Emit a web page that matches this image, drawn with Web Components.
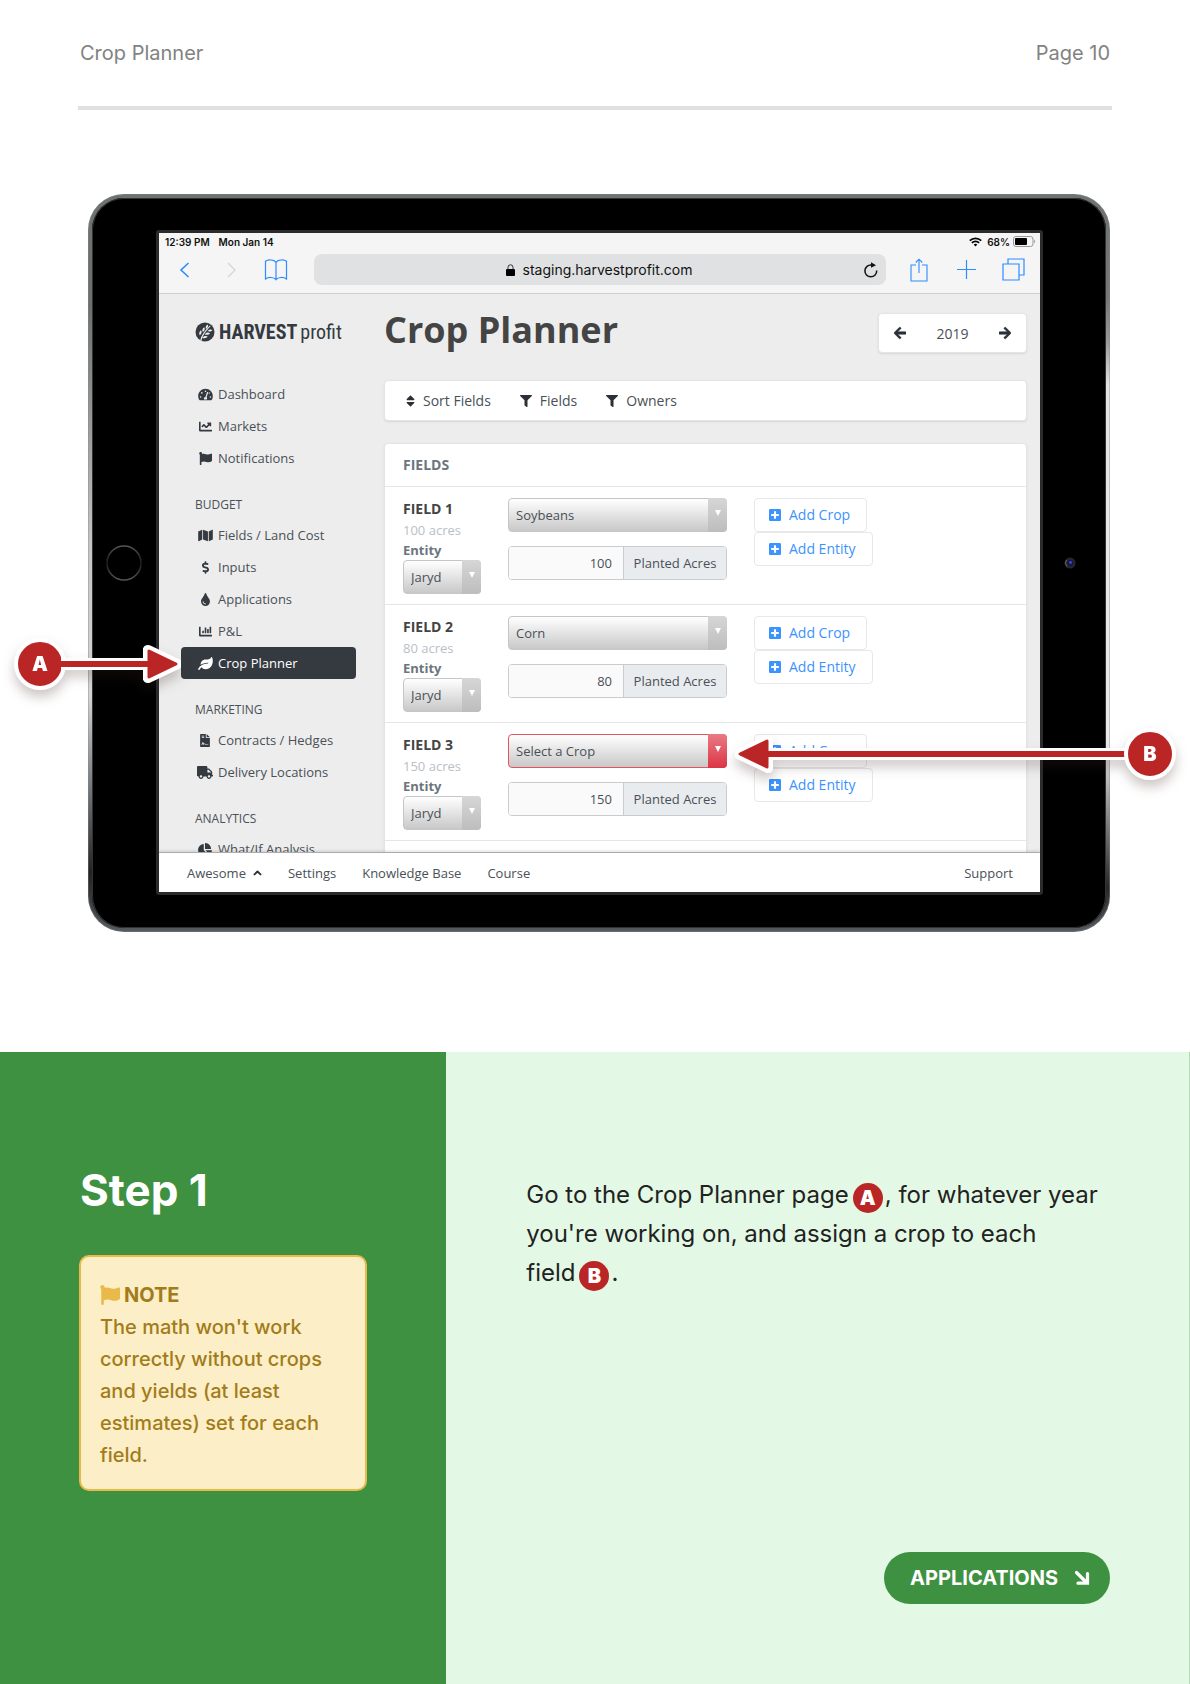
<!DOCTYPE html>
<html lang="en">
<head>
<meta charset="utf-8">
<meta name="viewport" content="width=device-width, initial-scale=1">
<title>Crop Planner – Page 10</title>
<style>
  html, body { margin: 0; }
  body {
    display: flex; flex-direction: column; min-height: 100vh;
    background: #fff; color: #222; font-family: Inter, "Liberation Sans", sans-serif;
    --green: #3f9142; --mint: #e3f9e5; --red: #ba2525;
  }
  .keep { white-space: nowrap; }
</style>
</head>
<body>
<guide-header><span>Crop Planner</span><span slot="page">Page 10</span></guide-header>

<device-stage>
  <tablet-frame>
    <browser-bar></browser-bar>
    <planner-app>
      <side-nav slot="nav">
        <nav-item icon="gauge">Dashboard</nav-item>
        <nav-item icon="line">Markets</nav-item>
        <nav-item icon="flag">Notifications</nav-item>
        <nav-title>BUDGET</nav-title>
        <nav-item icon="map">Fields / Land Cost</nav-item>
        <nav-item icon="dollar">Inputs</nav-item>
        <nav-item icon="drop">Applications</nav-item>
        <nav-item icon="bars">P&amp;L</nav-item>
        <nav-item icon="leaf" active>Crop Planner</nav-item>
        <nav-title>MARKETING</nav-title>
        <nav-item icon="contract">Contracts / Hedges</nav-item>
        <nav-item icon="truck">Delivery Locations</nav-item>
        <nav-title>ANALYTICS</nav-title>
        <nav-item icon="pie">What/If Analysis</nav-item>
      </side-nav>
      <field-row name="FIELD 1" acres="100" crop="Soybeans"></field-row>
      <field-row name="FIELD 2" acres="80" crop="Corn"></field-row>
      <field-row name="FIELD 3" acres="150" crop="Select a Crop" invalid></field-row>
    </planner-app>
    <app-footer></app-footer>
  </tablet-frame>
  <callout-arrow slot="a" letter="A"></callout-arrow>
  <callout-arrow slot="b" letter="B"></callout-arrow>
</device-stage>

<step-section>
  <span slot="title">Step 1</span>
  <note-box slot="note">The math won't work correctly without crops and yields (at least estimates) set for each field.</note-box>
  <span>Go to the Crop Planner page<marker-badge>A</marker-badge>, for whatever year you're working on, and assign a crop to each <span class="keep">field<marker-badge>B</marker-badge>.</span></span>
  <pill-link slot="link">APPLICATIONS</pill-link>
</step-section>

<script>
const define = (name, css, html) => {
  const template = document.createElement('template');
  customElements.define(name, class extends HTMLElement {
    connectedCallback() {
      if (this.shadowRoot) return;
      const root = this.attachShadow({ mode: 'open' });
      template.innerHTML = `<style>:host,*{box-sizing:border-box}${css}</style>` +
        (typeof html === 'function' ? html(this) : html);
      root.append(template.content.cloneNode(true));
    }
  });
};

const ICONS = {
  gauge: [576, '<path fill-rule="evenodd" d="M288 32C129 32 0 161 0 320c0 53 14 102 39 145 6 10 16 15 28 15h442c12 0 22-5 28-15 25-43 39-92 39-145C576 161 447 32 288 32zm0 64a32 32 0 1 1 0 64 32 32 0 0 1 0-64zM96 384a32 32 0 1 1 0-64 32 32 0 0 1 0 64zm48-160a32 32 0 1 1 0-64 32 32 0 0 1 0 64zm247-39l-61 183c27 20 29 56 14 80H232c-20-40 6-94 53-96l61-182c10-30 54-15 45 15zm41 39c-10 0-18-4-24-11l16-48c22-5 40 8 40 27 0 18-14 32-32 32zm48 160a32 32 0 1 1 0-64 32 32 0 0 1 0 64z"/>'],
  line: [512, '<path d="M496 384H64V80c0-8.84-7.16-16-16-16H16C7.16 64 0 71.16 0 80v336c0 17.67 14.33 32 32 32h464c8.84 0 16-7.16 16-16v-32c0-8.84-7.16-16-16-16zM464 96H345.94c-21.38 0-32.09 25.85-16.97 40.97l32.4 32.4L288 242.75l-73.37-73.37c-12.5-12.5-32.76-12.5-45.25 0l-68.69 68.69c-6.25 6.25-6.25 16.38 0 22.63l22.62 22.62c6.25 6.25 16.38 6.25 22.63 0L192 237.25l73.37 73.37c12.5 12.5 32.76 12.5 45.25 0l96-96 32.4 32.4c15.12 15.12 40.97 4.41 40.97-16.97V112c.01-8.84-7.15-16-15.99-16z"/>'],
  flag: [512, '<path d="M349.565 98.783C295.978 98.783 251.721 64 184.348 64c-24.955 0-47.309 4.384-68.045 12.013a55.947 55.947 0 0 0 3.586-23.562C118.117 24.015 94.806 1.206 66.338.048 34.345-1.254 8 24.296 8 56c0 19.026 9.497 35.825 24 45.945V488c0 13.255 10.745 24 24 24h16c13.255 0 24-10.745 24-24v-94.4c28.311-12.064 63.582-22.122 114.435-22.122 53.588 0 97.844 34.783 165.217 34.783 48.169 0 86.667-16.294 122.505-40.858C506.84 359.452 512 349.571 512 339.045v-243.1c0-23.393-24.269-38.87-45.485-29.016-34.338 15.948-76.454 31.854-116.95 31.854z"/>'],
  map: [576, '<path d="M0 117.66v346.32c0 11.32 11.43 19.06 21.94 14.86L160 416V32L20.12 87.95A32.006 32.006 0 0 0 0 117.66zM192 416l192 64V96L192 32v384zM554.06 33.16L416 96v384l139.88-55.95A31.996 31.996 0 0 0 576 394.34V48.02c0-11.32-11.43-19.06-21.94-14.86z"/>'],
  dollar: [288, '<path d="M209.2 233.4l-108-31.6C88.7 198.2 80 186.5 80 173.5c0-16.3 13.2-29.5 29.5-29.5h66.3c12.2 0 24.2 3.7 34.2 10.5 6.1 4.1 14.3 3.1 19.5-2l34.8-34c7.1-6.9 6.1-18.4-1.8-24.5C238 74.8 207.4 64.1 176 64V16c0-8.8-7.2-16-16-16h-32c-8.8 0-16 7.2-16 16v48h-2.5C45.8 64-5.4 118.7.5 183.6c4.2 46.1 39.4 83.6 83.8 96.6l102.5 30c12.5 3.7 21.2 15.3 21.2 28.3 0 16.3-13.2 29.5-29.5 29.5h-66.3C100 368 88 364.3 78 357.5c-6.1-4.1-14.3-3.1-19.5 2l-34.8 34c-7.1 6.9-6.1 18.4 1.8 24.5 24.5 19.2 55.1 29.9 86.5 30v48c0 8.8 7.2 16 16 16h32c8.8 0 16-7.2 16-16v-48.2c46.6-.9 90.3-28.6 105.7-72.7 21.5-61.6-14.6-124.8-72.5-141.7z"/>'],
  drop: [352, '<path d="M205.22 22.09c-7.94-28.78-49.44-30.12-58.44 0C100.01 179.85 0 222.72 0 333.91 0 432.35 78.72 512 176 512s176-79.65 176-178.09c0-111.75-99.79-153.34-146.78-311.82zM176 448c-61.75 0-112-50.25-112-112 0-8.84 7.16-16 16-16s16 7.16 16 16c0 44.11 35.89 80 80 80 8.84 0 16 7.16 16 16s-7.16 16-16 16z"/>'],
  bars: [512, '<path d="M332.8 320h38.4c6.4 0 12.8-6.4 12.8-12.8V172.8c0-6.4-6.4-12.8-12.8-12.8h-38.4c-6.4 0-12.8 6.4-12.8 12.8v134.4c0 6.4 6.4 12.8 12.8 12.8zm96 0h38.4c6.4 0 12.8-6.4 12.8-12.8V76.8c0-6.4-6.4-12.8-12.8-12.8h-38.4c-6.4 0-12.8 6.4-12.8 12.8v230.4c0 6.4 6.4 12.8 12.8 12.8zm-288 0h38.4c6.4 0 12.8-6.4 12.8-12.8v-70.4c0-6.4-6.4-12.8-12.8-12.8h-38.4c-6.4 0-12.8 6.4-12.8 12.8v70.4c0 6.4 6.4 12.8 12.8 12.8zm96 0h38.4c6.4 0 12.8-6.4 12.8-12.8V108.8c0-6.4-6.4-12.8-12.8-12.8h-38.4c-6.4 0-12.8 6.4-12.8 12.8v198.4c0 6.4 6.4 12.8 12.8 12.8zM496 384H64V80c0-8.84-7.16-16-16-16H16C7.16 64 0 71.16 0 80v336c0 17.67 14.33 32 32 32h464c8.84 0 16-7.16 16-16v-32c0-8.84-7.16-16-16-16z"/>'],
  leaf: [576, '<path d="M546.2 9.7c-5.6-12.5-21.6-13-28.3-1.2C486.9 62.4 431.4 96 368 96h-80C182 96 96 182 96 288c0 7 .8 13.7 1.5 20.5C161.3 262.8 253.4 224 384 224c8.8 0 16 7.2 16 16s-7.2 16-16 16C132.6 256 26 410.1 2.4 468c-6.6 16.3 1.2 34.9 17.5 41.6 16.4 6.8 35-1.1 41.8-17.3 1.5-3.6 20.9-47.9 71.9-90.6 32.4 43.9 94 85.8 174.9 77.2C465.5 467.5 576 326.7 576 154.3c0-50.2-10.8-102.2-29.8-144.6z"/>'],
  contract: [384, '<path fill-rule="evenodd" d="M224 136V0H24C11 0 0 11 0 24v464c0 13 11 24 24 24h336c13 0 24-11 24-24V160H248c-13 0-24-11-24-24zM64 64h96v32H64zm0 64h96v32H64zm256 300h-90c-18 0-34-10-42-25-6-11-18-9-22 0l-12 25h-24l-30-50-14 54H56l32-112h30l34 62c18-18 50-12 62 11l8 7h98zM256 0v128h128z"/>'],
  truck: [640, '<path d="M624 352h-16V243.9c0-12.7-5.1-24.9-14.1-33.9L494 110.1c-9-9-21.2-14.1-33.9-14.1H416V48c0-26.5-21.5-48-48-48H48C21.5 0 0 21.5 0 48v320c0 26.5 21.5 48 48 48h16c0 53 43 96 96 96s96-43 96-96h128c0 53 43 96 96 96s96-43 96-96h48c8.8 0 16-7.2 16-16v-32c0-8.8-7.2-16-16-16zM160 464c-26.5 0-48-21.5-48-48s21.5-48 48-48 48 21.5 48 48-21.5 48-48 48zm320 0c-26.5 0-48-21.5-48-48s21.5-48 48-48 48 21.5 48 48-21.5 48-48 48zm80-208H416V144h44.1l99.9 99.9V256z"/>'],
  pie: [544, '<path d="M527.79 288H290.5l158.03 158.03c6.04 6.04 15.98 6.53 22.19.68 38.7-36.46 65.32-85.61 73.13-140.86 1.34-9.46-6.51-17.85-16.06-17.85zm-15.83-64.8C503.72 103.74 408.26 8.28 288.8.04 279.68-.59 272 7.1 272 16.24V240h223.77c9.14 0 16.82-7.68 16.19-16.8zM224 288V50.71c0-9.55-8.39-17.4-17.84-16.06C86.99 51.49-4.1 155.6.14 280.37 4.5 408.51 114.83 513.59 243.03 511.98c50.4-.63 96.97-16.87 135.26-44.03 7.9-5.6 8.42-17.23 1.57-24.08L224 288z"/>'],
  sort: [320, '<path d="M41 288h238c21.4 0 32.1 25.9 17 41L177 448c-9.4 9.4-24.6 9.4-33.9 0L24 329c-15.1-15.1-4.4-41 17-41zm255-105L177 64c-9.4-9.4-24.6-9.4-33.9 0L24 183c-15.1 15.1-4.4 41 17 41h238c21.4 0 32.1-25.9 17-41z"/>'],
  filter: [512, '<path d="M487.976 0H24.028C2.71 0-8.047 25.866 7.058 40.971L192 225.941V432c0 7.831 3.821 15.17 10.237 19.662l80 55.98C298.02 518.69 320 507.493 320 487.98V225.941l184.947-184.97C520.021 25.896 509.338 0 487.976 0z"/>'],
  plus: [448, '<path d="M400 32H48C21.5 32 0 53.5 0 80v352c0 26.5 21.5 48 48 48h352c26.5 0 48-21.5 48-48V80c0-26.5-21.5-48-48-48zm-32 252c0 6.6-5.4 12-12 12h-92v92c0 6.6-5.4 12-12 12h-56c-6.6 0-12-5.4-12-12v-92H92c-6.6 0-12-5.4-12-12v-56c0-6.6 5.4-12 12-12h92v-92c0-6.6 5.4-12 12-12h56c6.6 0 12 5.4 12 12v92h92c6.6 0 12 5.4 12 12v56z"/>'],
  left: [448, '<path stroke="currentColor" stroke-width="18" d="M257.5 445.1l-22.2 22.2c-9.4 9.4-24.6 9.4-33.9 0L7 273c-9.4-9.4-9.4-24.6 0-33.9L201.4 44.7c9.4-9.4 24.6-9.4 33.9 0l22.2 22.2c9.5 9.5 9.3 25-.4 34.3L136.600 206H424c13.3 0 24 10.700 24 24v52c0 13.300-10.700 24-24 24H136.600l120.500 104.800c9.800 9.300 10 24.800.4 34.300z"/>'],
  right: [448, '<path stroke="currentColor" stroke-width="18" transform="translate(448 0) scale(-1 1)" d="M257.5 445.1l-22.2 22.2c-9.4 9.4-24.6 9.4-33.9 0L7 273c-9.4-9.4-9.4-24.6 0-33.9L201.4 44.7c9.4-9.4 24.6-9.4 33.9 0l22.2 22.2c9.5 9.5 9.3 25-.4 34.3L136.600 206H424c13.3 0 24 10.700 24 24v52c0 13.300-10.700 24-24 24H136.600l120.500 104.800c9.800 9.300 10 24.800.4 34.300z"/>'],
  up: [448, '<path fill="none" stroke="currentColor" stroke-width="96" stroke-linecap="round" stroke-linejoin="round" d="M70 330l154-150 154 150"/>']
};
const icon = (name, size) =>
  `<svg aria-hidden="true" width="${Math.round(ICONS[name][0] / 512 * size)}" height="${size}" viewBox="0 0 ${ICONS[name][0]} 512" fill="currentColor">${ICONS[name][1]}</svg>`;

define('guide-header', `
  :host{display:block;padding:0 78px}
  header{display:flex;justify-content:space-between;align-items:center;height:110px;padding:0 2px;
    border-bottom:4px solid #e0e0e0;color:#828282;font-size:20px;line-height:24px}`,
  `<header><slot></slot><slot name="page"></slot></header>`);

define('device-stage', `
  :host{display:block;position:relative;padding:84px 80px 120px 88px}
  ::slotted([slot=a]){position:absolute;left:10px;top:524px;width:171px;height:60px}
  ::slotted([slot=b]){position:absolute;left:735px;right:10px;top:614px;height:60px}`,
  `<slot></slot><slot name="a"></slot><slot name="b"></slot>`);

define('tablet-frame', `
  :host{display:block}
  .rim{padding:4px;border-radius:36px;box-shadow:inset 0 0 0 1px #8886;
    background:
      linear-gradient(to bottom,#6d7272 0,#6c6f70 15%,#c4c6c7 48%,#d2d4d5 68%,#777c82 80%,#222 92%,#555b60 100%) left/50% 100% no-repeat,
      linear-gradient(to bottom,#6d7272 0,#777 14%,#999 20%,#e4e4e4 26%,#e9e9e9 75%,#8a8a8a 84%,#2a2628 94%,#555b60 100%) right/50% 100% no-repeat}
  .glass{display:flex;align-items:stretch;background:#000;border-radius:32px;padding:32px 0 33px;box-shadow:inset 0 0 0 1px #333}
  .side{flex:0 0 64px;display:flex;align-items:center;justify-content:center}
  .side:last-child{flex-basis:63px;padding-right:9px}
  .screen{flex:1;min-width:0;border:3px solid #2b2b2c;border-radius:3px;background:#ededed;overflow:hidden}
  .home{border:0;padding:0;background:none;display:flex}`,
  `<div class="rim"><div class="glass">
    <div class="side"><button class="home" aria-label="Home"><svg width="38" height="38" viewBox="0 0 38 38" fill="none"><defs><linearGradient id="g" x2="0" y2="1"><stop stop-color="#555"/><stop offset=".5" stop-color="#1a1a1a"/><stop offset="1" stop-color="#555"/></linearGradient></defs><circle cx="19" cy="19" r="17" stroke="url(#g)" stroke-width="1.6"/></svg></button></div>
    <div class="screen"><slot></slot></div>
    <div class="side"><svg width="12" height="12" viewBox="0 0 12 12"><circle cx="6" cy="6" r="5.5" fill="#26262b"/><path d="M2.5 3a5 5 0 0 0 .5 6.500" stroke="#666" fill="none"/><circle cx="6.500" cy="6" r="3" fill="#16164f"/><circle cx="6.500" cy="5.500" r="1.400" fill="#4048d0"/></svg></div>
  </div></div>`);

define('browser-bar', `
  :host{display:block;height:61px;background:#f5f5f5;border-bottom:1px solid #cdd0cf;color:#111}
  .status{display:flex;align-items:center;height:21px;padding:0 4px 4px 6px;font-size:10px;line-height:12px;font-weight:600}
  .status span+span{margin-left:9px}
  .status .wifi{margin-left:auto}
  .status .wifi+span{margin:0 3px 0 5px}
  .bar{display:flex;align-items:center;height:31px;color:#2d8cff}
  button{display:flex;justify-content:center;padding:0;border:0;background:none;color:inherit}
  button svg{fill:none;stroke:currentColor}
  .back{margin-left:20px}.fwd{margin-left:36px;color:#d5d5d7}.book{margin-left:27px}
  .addr{flex:1;display:flex;align-items:center;height:31px;margin:0 21px 0 26px;padding:0 8px 0 20px;border-radius:8px;background:#e0e1e3;color:#111}
  .url{flex:1;display:flex;align-items:center;justify-content:center;gap:8px;font-size:14px;line-height:18px}
  .tools{display:flex;align-items:center;gap:23px;margin-right:15px}
  .tools button{width:24px}`,
  `<div class="status"><span>12:39 PM</span><span>Mon Jan 14</span>
    <svg class="wifi" width="13" height="10" viewBox="0 0 13 10" fill="none" stroke="#000" stroke-width="1.700"><path d="M.8 3.700a8 8 0 0 1 11.400 0M2.900 5.900a5 5 0 0 1 7.200 0"/><path d="M6.500 9.500L4.700 7.600a2.500 2.500 0 0 1 3.600 0z" fill="#000" stroke="none"/></svg>
    <span>68%</span><svg width="23" height="11" viewBox="0 0 23 11"><rect x=".5" y=".5" width="19.500" height="10" rx="2.500" fill="none" stroke="#999"/><rect x="2" y="2" width="12" height="7" rx="1" fill="#000"/><path d="M21.200 3.800c1.400.5 1.400 2.900 0 3.400z" fill="#999"/></svg></div>
  <div class="bar">
    <button class="back" aria-label="Back"><svg width="11" height="18" viewBox="0 0 11 18" stroke-width="1.600"><path d="M9.500 2L2 9l7.500 7"/></svg></button>
    <button class="fwd" aria-label="Forward"><svg width="11" height="18" viewBox="0 0 11 18" stroke-width="1.300"><path d="M2 2l7 7-7 7"/></svg></button>
    <button class="book" aria-label="Bookmarks"><svg width="24" height="22" viewBox="0 0 24 22" stroke-width="1.200"><path d="M12 3.500C10.500.5 3.500.2 1.500 2.500V20c3-2.300 8.500-2 10.500.7C14 18 19.500 17.700 22.500 20V2.500C20.500.2 13.500.5 12 3.500zV21"/></svg></button>
    <div class="addr"><div class="url"><svg width="9" height="12" viewBox="0 0 9 12"><rect y="5" width="9" height="7" rx="1"/><path d="M2 5.500V3.300a2.500 2.500 0 0 1 5 0v2.200" fill="none" stroke="#333"/></svg><span>staging.harvestprofit.com</span></div>
      <button aria-label="Reload"><svg width="14" height="16" viewBox="0 0 14 16" stroke-width="1.500"><path d="M12.700 8.500A5.900 5.900 0 1 1 7.500 3"/><path d="M7 .3l5 2.900-5 2.600z" fill="#111" stroke="none"/></svg></button></div>
    <div class="tools">
      <button aria-label="Share"><svg width="18" height="24" viewBox="0 0 18 24" stroke-width="1.100"><path d="M6 7H1v16h16V7h-5M9 15V1.500M5.700 4.500L9 1.200l3.300 3.300"/></svg></button>
      <button aria-label="New tab"><svg width="19" height="19" viewBox="0 0 19 19" stroke-width="1.200"><path d="M9.500 0v19M0 9.500h19"/></svg></button>
      <button aria-label="Tabs"><svg width="23" height="23" viewBox="0 0 23 23" stroke-width="1.200"><path d="M1 6h16v16H1zM6 6V1h16v16h-5"/></svg></button>
    </div>
  </div>`);

define('planner-app', `
  :host{display:flex;height:558px;overflow:hidden;background:#ededed;font-family:"Open Sans","Noto Sans",sans-serif;color:#495057}
  main{flex:1;min-width:0;padding:0 13px 0 28px}
  .top{display:flex;align-items:flex-start;justify-content:space-between;height:86px}
  h1{margin:12px 0 0;font-size:36px;line-height:48px;color:#444;font-weight:700}
  .card{background:#fff;border:1px solid #e3e4e6;border-radius:4px;box-shadow:0 1px 2px #d5d7da}
  .year{display:flex;align-items:center;justify-content:space-between;width:149px;height:40px;margin-top:19px;padding:0 15px;font-size:14px}
  button{display:flex;align-items:center;padding:0;border:0;background:none;font:inherit;color:inherit}
  button svg{color:#2b3036}
  .filters{display:flex;align-items:center;gap:29px;height:41px;padding:0 21px;font-size:14px;line-height:20px}
  .filters button{gap:8px}
  .fields{margin-top:22px;padding-bottom:30px}
  h2{margin:0;padding:0 18px;height:43px;border-bottom:1px solid #e5e6e8;font-size:14px;line-height:42px;color:#6c757d}`,
  `<slot name="nav"></slot><main>
    <div class="top"><h1>Crop Planner</h1><div class="card year"><button aria-label="Previous year">${icon('left',14)}</button><span>2019</span><button aria-label="Next year">${icon('right',14)}</button></div></div>
    <div class="card filters"><button>${icon('sort',14)}Sort Fields</button><button>${icon('filter',12)}Fields</button><button>${icon('filter',12)}Owners</button></div>
    <section class="card fields"><h2>FIELDS</h2><slot></slot></section>
  </main>`);

define('side-nav', `
  :host{display:block;flex:0 0 197px;padding-left:22px}
  .brand{display:flex;align-items:center;gap:4px;height:84px;padding:0 0 9px 14px;color:#343a40;
    font-family:"Liberation Sans Narrow","Roboto Condensed","Liberation Sans",sans-serif;font-size:20px;line-height:24px;white-space:nowrap}
  .brand b{margin-right:3px}
  .brand span{display:block}`,
  `<div class="brand"><svg width="20" height="20" viewBox="0 0 20 20"><circle cx="10" cy="10" r="9.500" fill="#343a40"/><g fill="#ededed"><path d="M5.200 18.300c1-5 4.600-9.500 9.700-14.700l.7.700C10.700 9.300 7.400 13.500 6.500 19z"/><path d="M4.600 13.200c-.9-2.400 0-4 1.500-5 .9 1.800.7 3.600-1.500 5zM7.700 10c-.8-2.300.1-3.900 1.600-4.800.9 1.700.6 3.500-1.600 4.800zM10.900 7c-.6-2.300.2-3.700 1.800-4.500.8 1.700.4 3.300-1.800 4.500zM7.200 15.900c2.500.9 4.400.2 5.500-1.300-1.900-1-3.900-.8-5.500 1.300zM9.800 12.400c2.300.9 4.200.2 5.200-1.200-1.800-1-3.700-.8-5.200 1.200zM12.500 9.100c2.200.8 3.900.2 4.900-1.200-1.700-.9-3.500-.7-4.900 1.200z"/></g></svg><span><b>HARVEST</b>profit</span></div>
  <nav><slot></slot></nav>`);

define('nav-item', `
  :host{display:block}
  a{display:flex;align-items:center;height:32px;padding-left:14px;border-radius:4px;color:#495057;text-decoration:none;font-size:13px;line-height:18px}
  i{flex:0 0 20px;margin-right:3px;display:flex;justify-content:center;color:#343a40}
  :host([active]) a{background:#343a40;color:#fff}
  :host([active]) i{color:#fff}`,
  el => `<a href="#"><i>${icon(el.getAttribute('icon'),13)}</i><slot></slot></a>`);

define('nav-title', `
  :host{display:block;height:45px;padding:23px 14px 0;font-size:12px;line-height:16px}`,
  `<slot></slot>`);

define('gray-select', `
  :host{display:grid;--edge:#c6c6c6;--tab:linear-gradient(#d6d6d6,#bdbdbd)}
  :host([invalid]){--edge:#e55361;--tab:linear-gradient(#ea7a85,#dc3545)}
  select,i{grid-area:1/1}
  select{appearance:none;width:100%;height:34px;padding:0 24px 0 7px;border:1px solid var(--edge);border-radius:4px;
    background:linear-gradient(#fff,#c8c8c8);font:13px/18px "Open Sans","Noto Sans",sans-serif;color:#495057}
  i{justify-self:end;width:19px;height:34px;border-radius:0 4px 4px 0;background:var(--tab);pointer-events:none;display:flex;align-items:center;justify-content:center;padding-bottom:4px}`,
  el => `<select aria-label="${el.getAttribute('label')}"><option>${el.getAttribute('value')}</option></select><i><svg width="6" height="6" viewBox="0 0 6 6"><path d="M0 0h6L3 6z" fill="#fff"/></svg></i>`);

define('field-row', `
  :host{display:grid;grid-template-columns:78px 219px auto;column-gap:27px;justify-content:start;height:118px;padding:11px 18px 0;border-bottom:1px solid #e5e6e8;font-size:13px}
  h3{margin:0;font-size:14px;line-height:22px;color:#444;font-weight:700}
  .acres{line-height:20px;color:#b9c0c6}
  .entity{line-height:20px;font-weight:700;color:#6c757d}
  .planted{display:flex;height:34px;margin-top:14px;border:1px solid #c9cccf;border-radius:4px;overflow:hidden}
  input{flex:1;min-width:0;border:0;border-right:1px solid #c9cccf;background:#fafafa;padding:0 11px;text-align:right;font:inherit;color:#495057}
  label.unit{flex:0 0 102px;background:#e9ecef;text-align:center;line-height:32px}
  .act{display:flex;flex-direction:column;align-items:flex-start}
  button{display:flex;align-items:center;gap:8px;height:34px;padding:0 16px 0 14px;border:1px solid #e6e8eb;border-radius:4px;background:#fff;color:#3b93ff;font:14px/20px "Open Sans","Noto Sans",sans-serif}`,
  el => `<div><h3>${el.getAttribute('name')}</h3><div class="acres">${el.getAttribute('acres')} acres</div><div class="entity">Entity</div><gray-select label="Entity" value="Jaryd"></gray-select></div>
  <div><gray-select label="Crop" value="${el.getAttribute('crop')}" ${el.hasAttribute('invalid') ? 'invalid' : ''}></gray-select>
  <div class="planted"><input id="p" type="text" inputmode="numeric" value="${el.getAttribute('acres')}"><label class="unit" for="p">Planted Acres</label></div></div>
  <div class="act"><button>${icon('plus',14)}Add Crop</button><button>${icon('plus',14)}Add Entity</button></div>`);

define('app-footer', `
  :host{display:flex;align-items:center;gap:26px;height:40px;padding:0 27px 0 28px;border-top:1px solid #a9abad;background:#fff;position:relative;
    box-shadow:0 -1px 3px #0002;font:13px/18px "Open Sans","Noto Sans",sans-serif;color:#495057}
  a{display:flex;align-items:center;gap:7px;color:inherit;text-decoration:none}
  a:last-child{margin-left:auto}
  svg{color:#2b3036}`,
  `<a href="#">Awesome${icon('up',10)}</a><a href="#">Settings</a><a href="#">Knowledge Base</a><a href="#">Course</a><a href="#">Support</a>`);

/* A lettered disc with an arrow that reaches over the tablet: A points right, B points left. */
define('callout-arrow', `
  :host{display:block;pointer-events:none;filter:drop-shadow(0 7px 6px rgba(60,40,30,.26))}
  .row{display:flex;align-items:center;height:60px}
  .row.left{flex-direction:row-reverse}
  .disc{flex:0 0 52px;display:flex;align-items:center;justify-content:center;height:52px;margin:0 4px;border:4px solid #fff;border-radius:50%;background:var(--red);color:#fff;font-weight:900;font-size:20px;line-height:24px}
  .line{flex:1;height:12px;margin:0 -9px;border:solid #fff;border-width:3px 0;background:var(--red)}
  svg{flex:none;display:block}
  .left svg{transform:scaleX(-1)}`,
  el => `<div class="row ${el.getAttribute('letter') === 'B' ? 'left' : ''}"><span class="disc">${el.getAttribute('letter')}</span><span class="line"></span>
    <svg width="38" height="40" viewBox="0 0 38 40"><path d="M5 6.500v27L33.500 20z" fill="#fff" stroke="#fff" stroke-width="11" stroke-linejoin="round"/><path d="M0 17h8v6H0z" fill="var(--red)"/><path d="M6 7v26l27-13z" fill="var(--red)" stroke="var(--red)" stroke-width="3" stroke-linejoin="round"/></svg></div>`);

define('marker-badge', `
  :host{display:inline-flex;align-items:center;justify-content:center;width:30px;height:30px;margin:0 2px 0 4px;border-radius:50%;background:var(--red);color:#fff;font-weight:900;font-size:20px;line-height:24px;vertical-align:-2px}`,
  `<slot></slot>`);

define('note-box', `
  :host{display:block;border:2px solid #e9b949;border-radius:10px;padding:22px 19px 18px;background:#fcefc7;color:#a27c1a;font-size:20px;font-weight:500;line-height:32px}
  div{display:flex;align-items:center;gap:4px;font-weight:700}
  svg{color:#e9b949}`,
  `<div>${icon('flag',20)}NOTE</div><slot></slot>`);

define('pill-link', `
  :host{display:block}
  a{display:flex;align-items:center;gap:16px;height:52px;padding:0 20px 0 26px;border-radius:26px;background:var(--green);color:#fff;font-weight:700;font-size:20px;line-height:24px;text-decoration:none}`,
  `<a href="#"><slot></slot><svg width="16" height="16" viewBox="0 0 16 16" fill="none" stroke="#fff" stroke-width="3.200" stroke-linecap="round"><path d="M2.500 2.500l10 10M4 13.200h9.500V3.500"/></svg></a>`);

define('step-section', `
  :host{flex:1;display:flex}
  .left{flex:0 0 37.5%;padding:110px 79px 80px;background:var(--green)}
  h2{margin:0;color:#fff;font-size:44px;line-height:56px;font-weight:700;padding-left:1px}
  ::slotted(note-box){margin-top:37px}
  .right{flex:1;display:flex;flex-direction:column;justify-content:space-between;padding:123px 79px 80px 80px;background:var(--mint);border-right:1px solid #b3dcb6}
  p{margin:0;font-size:24px;line-height:39px;color:#222}
  .go{display:flex;justify-content:flex-end}`,
  `<div class="left"><h2><slot name="title"></slot></h2><slot name="note"></slot></div>
   <div class="right"><p><slot></slot></p><div class="go"><slot name="link"></slot></div></div>`);
</script>
</body>
</html>
